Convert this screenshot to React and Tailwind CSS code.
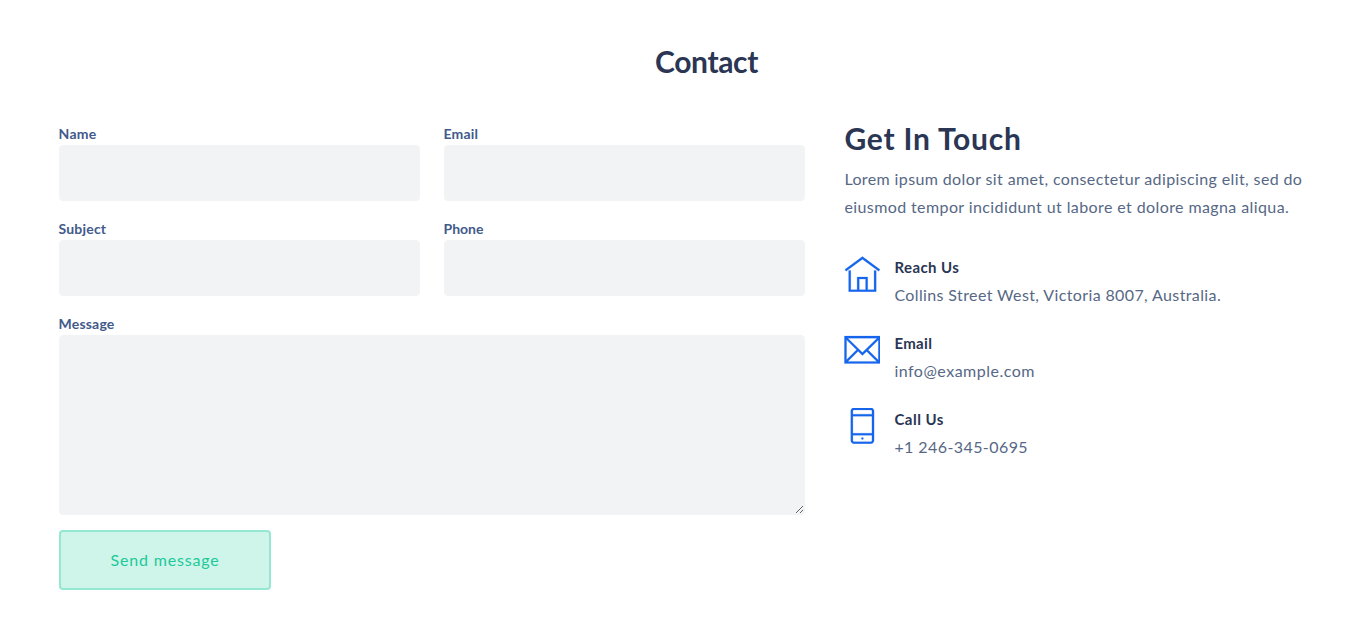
import { TfiHome, TfiEmail, TfiMobile } from "react-icons/tfi";

const input = "block w-full rounded border border-[#f1f3f5] bg-[#f1f3f5] px-4 outline-none";

function Field({ id, label, tracking }) {
  return (
    <div>
      <label htmlFor={id} className={`-ml-px block h-[22px] pl-[0.5px] text-sm leading-[22px] font-bold text-[#425a8b] ${tracking}`}>
        {label}
      </label>
      <input id={id} type="text" className={`${input} h-14`} />
    </div>
  );
}

const contacts = [
  { Icon: TfiHome, title: "Reach Us", text: "Collins Street West, Victoria 8007, Australia.", titleTracking: "tracking-[0.43px]", textTracking: "tracking-[0.38px]" },
  { Icon: TfiEmail, title: "Email", text: "info@example.com", titleTracking: "tracking-[0.35px]", textTracking: "tracking-[0.5px]" },
  { Icon: TfiMobile, title: "Call Us", text: "+1 246-345-0695", titleTracking: "tracking-[0.5px]", textTracking: "tracking-[0.42px]" },
];

export default function App() {
  return (
    <section className="min-h-[634px] bg-white pt-[43px] pl-[59px] font-['Lato',sans-serif] text-base text-[#566885]">
      <h2 className="w-[1295px] text-center text-[30px] leading-9 font-bold tracking-[-0.35px] text-[#2a3653]">Contact</h2>
      <div className="mt-11 flex gap-[39.4px]">
        <form className="w-[746px] shrink-0" onSubmit={(e) => e.preventDefault()}>
          <div className="grid grid-cols-2 gap-x-6 gap-y-[17px]">
            <Field id="name" label="Name" tracking="tracking-[0.3px]" />
            <Field id="email" label="Email" tracking="tracking-[0.15px]" />
            <Field id="subject" label="Subject" tracking="tracking-[0.2px]" />
            <Field id="phone" label="Phone" tracking="tracking-normal" />
          </div>
          <label htmlFor="message" className="mt-[17px] -ml-px block h-[22px] pl-[0.5px] text-sm leading-[22px] font-bold tracking-[0.2px] text-[#425a8b]">
            Message
          </label>
          <textarea id="message" className={`${input} h-[180px] resize`} />
          <button
            type="submit"
            className="mt-[15px] block h-[60px] w-[212px] rounded border-2 border-[#94e7d0] bg-[#cff4e9] text-base tracking-[0.82px] text-[#1cc99a]"
          >
            Send message
          </button>
        </form>
        <div className="w-[480px]">
          <h3 className="-mt-[3px] h-[45px] text-[30px] leading-9 font-bold tracking-[0.8px] text-[#2a3653]">Get In Touch</h3>
          <p className="leading-7 tracking-[0.38px]">
            Lorem ipsum dolor sit amet, consectetur adipiscing elit, sed do
            <br />
            <span className="tracking-[0.4px]">eiusmod tempor incididunt ut labore et dolore magna aliqua.</span>
          </p>
          <ul className="mt-8 flex flex-col gap-5">
            {contacts.map(({ Icon, title, text, titleTracking, textTracking }) => (
              <li key={title} className="flex gap-3.5">
                <Icon strokeWidth="0.1" viewBox="-0.2 0.1 17 17" className="mt-[3px] size-9 shrink-0 text-[#1665ed]" />
                <div className="leading-7">
                  <h4 className={`text-[15px] leading-7 font-bold text-[#2a3653] ${titleTracking}`}>{title}</h4>
                  <p className={textTracking}>{text}</p>
                </div>
              </li>
            ))}
          </ul>
        </div>
      </div>
    </section>
  );
}
